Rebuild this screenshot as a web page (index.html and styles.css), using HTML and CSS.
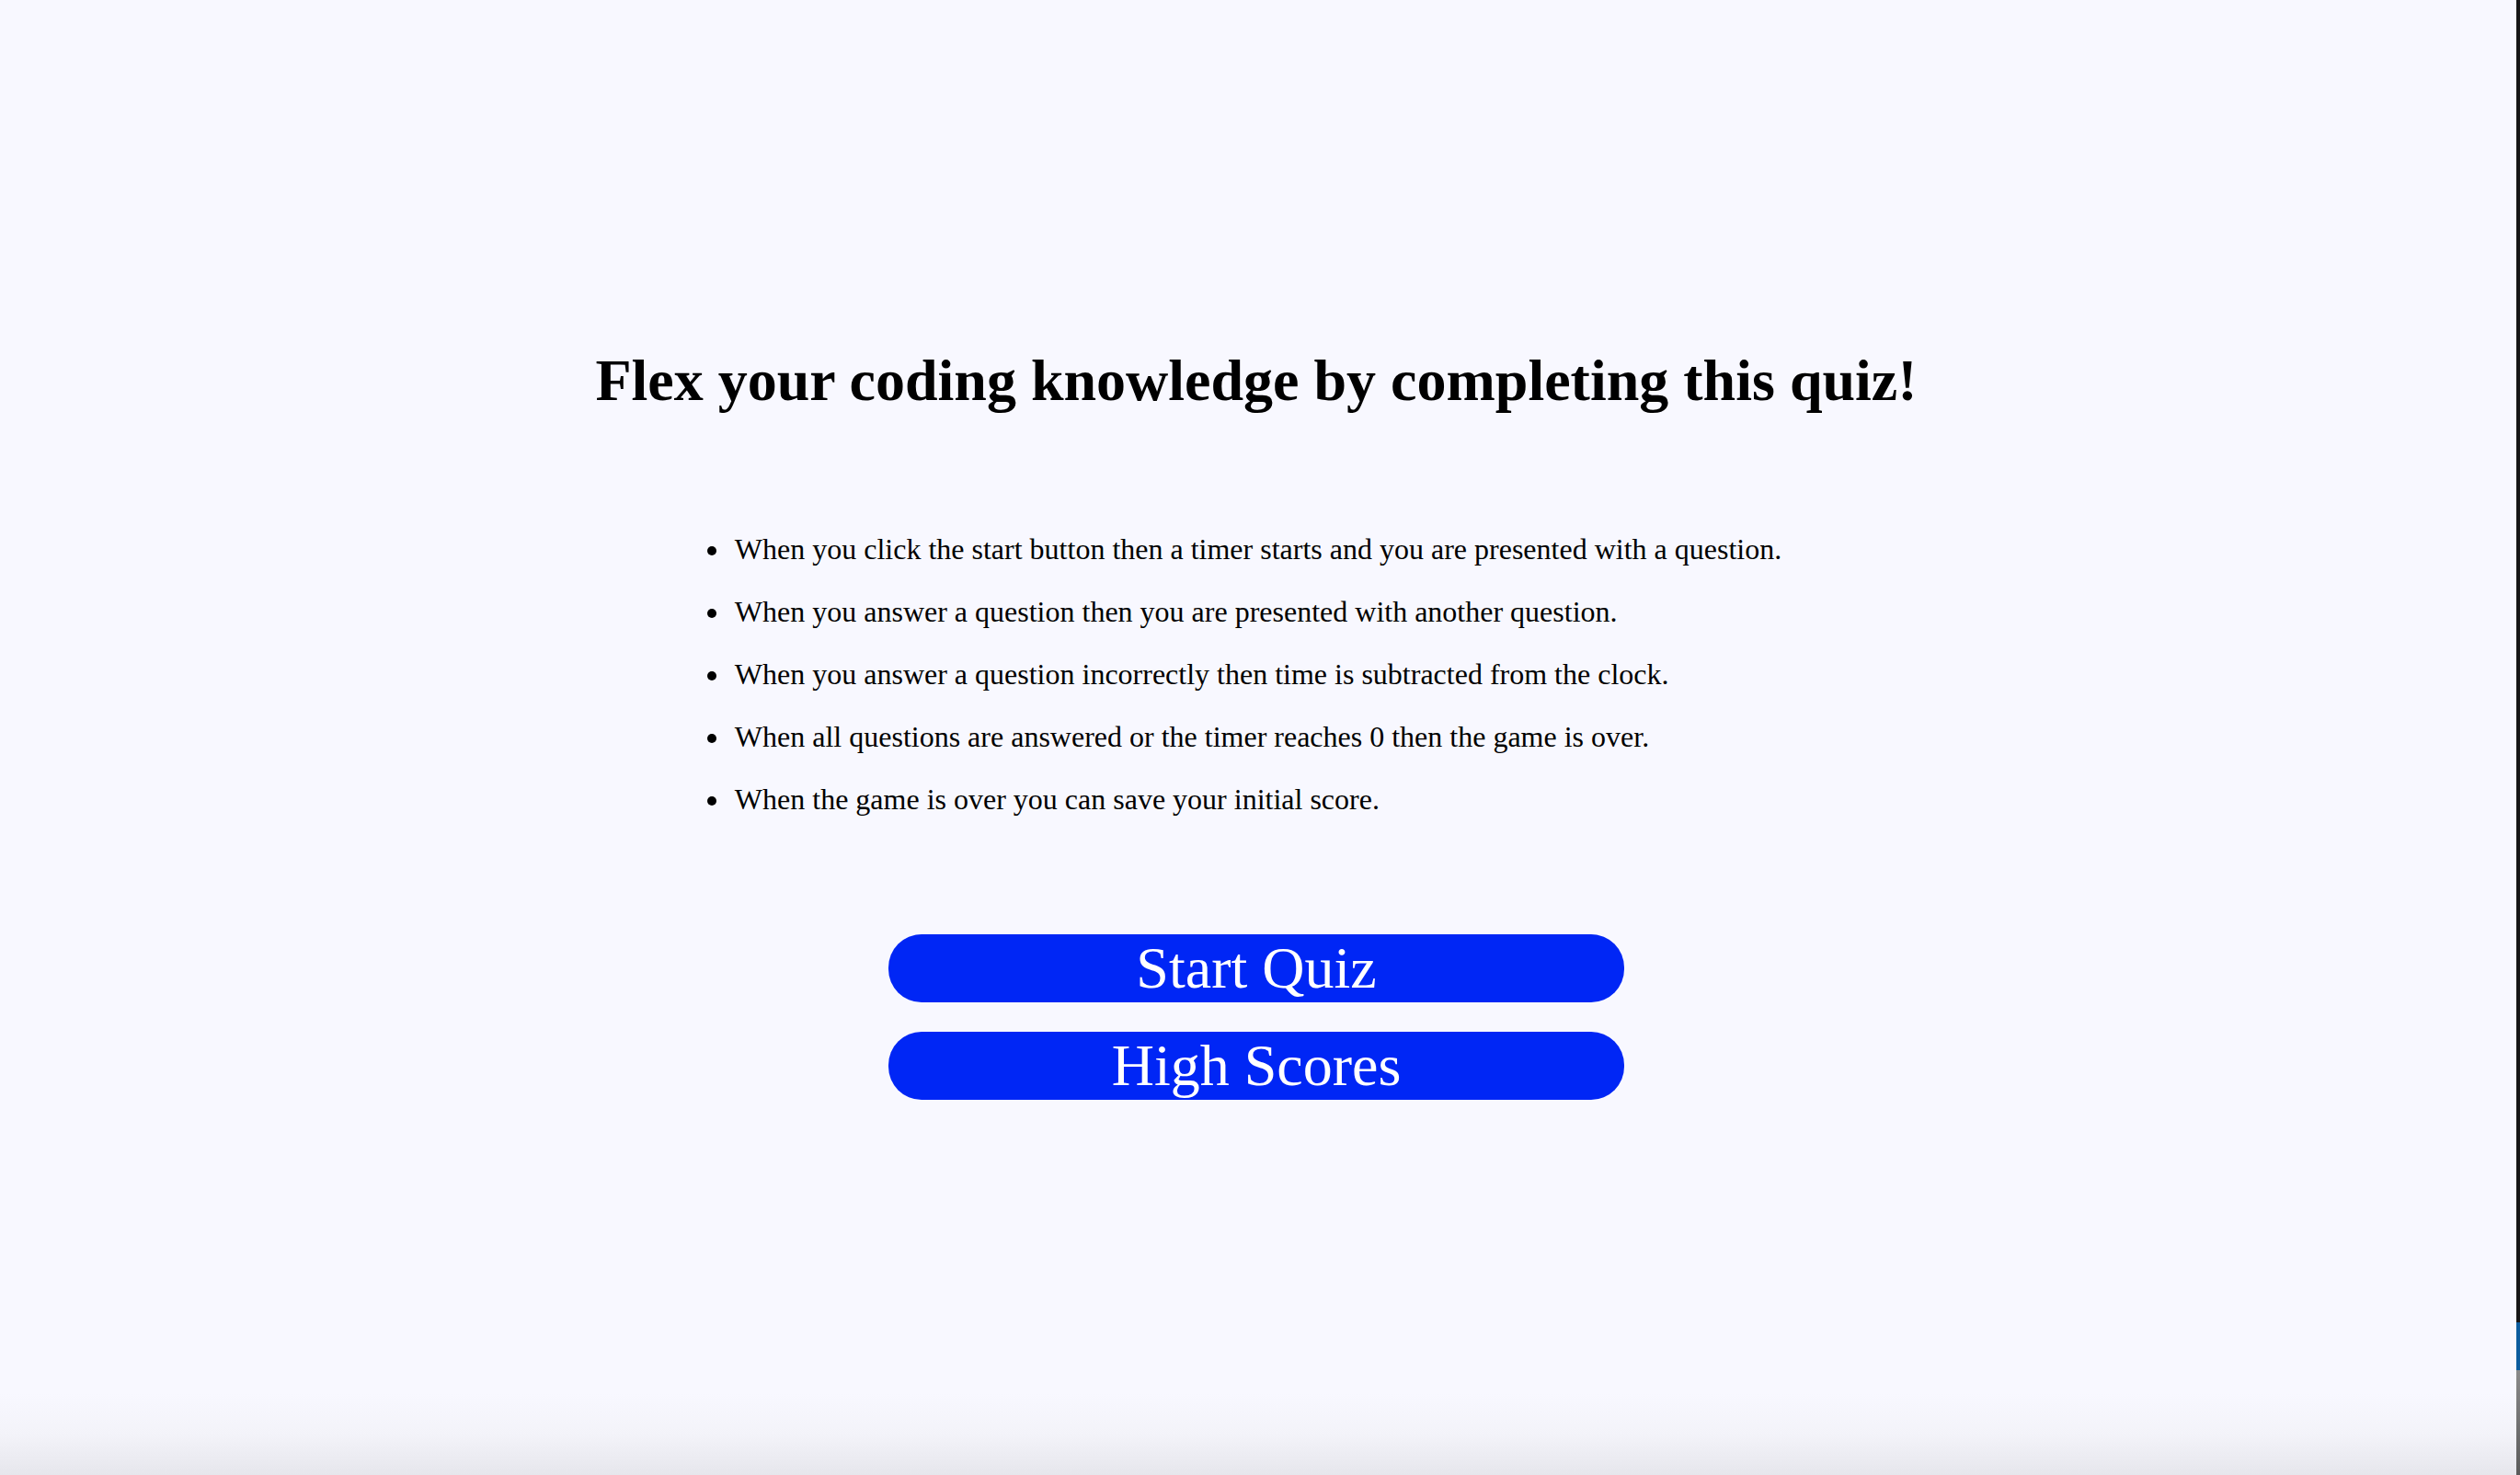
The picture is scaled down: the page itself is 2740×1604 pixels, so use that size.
FILE: index.html
```html
<!DOCTYPE html>
<html lang="en">
<head>
<meta charset="utf-8">
<title>Coding Quiz</title>
<link rel="stylesheet" href="styles.css">
</head>
<body>
<div class="window">
  <main class="page">
    <h1 class="title">Flex your coding knowledge by completing this quiz!</h1>
    <ul class="rules">
      <li>When you click the start button then a timer starts and you are presented with a question.</li>
      <li>When you answer a question then you are presented with another question.</li>
      <li>When you answer a question incorrectly then time is subtracted from the clock.</li>
      <li>When all questions are answered or the timer reaches 0 then the game is over.</li>
      <li>When the game is over you can save your initial score.</li>
    </ul>
    <div class="actions">
      <button class="btn" type="button">Start Quiz</button>
      <button class="btn" type="button">High Scores</button>
    </div>
  </main>
  <div class="edge">
    <div class="edge-dark"></div>
    <div class="edge-blue"></div>
    <div class="edge-gray"></div>
  </div>
</div>
</body>
</html>
```
FILE: styles.css
```css
html, body {
  margin: 0;
  padding: 0;
  height: 100%;
}

body {
  font-family: "Liberation Serif", "Times New Roman", serif;
  color: #000;
  background: #f8f8ff;
}

.window {
  display: flex;
  height: 1604px;
  overflow: hidden;
}

.page {
  flex: 1;
  display: flex;
  flex-direction: column;
  align-items: center;
  padding-top: 378px;
  padding-right: 4px;
  background: linear-gradient(to bottom, #f8f8ff 0, #f8f8ff 1515px, #f3f3f9 1560px, #e6e6ec 1604px);
}

.title {
  margin: 0 0 129px;
  font-size: 64px;
  line-height: 72px;
  font-weight: bold;
  text-align: center;
}

.rules {
  margin: 0 0 129px;
  padding: 0;
  width: fit-content;
  font-size: 32px;
  line-height: 36px;
  list-style: disc outside;
}

.rules li {
  margin: 0 0 32px;
  padding-left: 4px;
}

.rules li:last-child {
  margin-bottom: 0;
}

.actions {
  display: flex;
  flex-direction: column;
  align-items: center;
  gap: 32px;
}

.btn {
  width: 800px;
  height: 74px;
  padding: 0;
  border: none;
  border-radius: 36px;
  background: #0026f5;
  color: #fff;
  font-family: "Liberation Serif", "Times New Roman", serif;
  font-size: 64px;
  line-height: 74px;
}

.edge {
  width: 4px;
  display: flex;
  flex-direction: column;
}

.edge-dark {
  height: 1438px;
  background: #161616;
}

.edge-blue {
  height: 52px;
  background: #0b5c9e;
}

.edge-gray {
  flex: 1;
  background: linear-gradient(to bottom, #8a8a8a, #5a5a5a);
}
```
